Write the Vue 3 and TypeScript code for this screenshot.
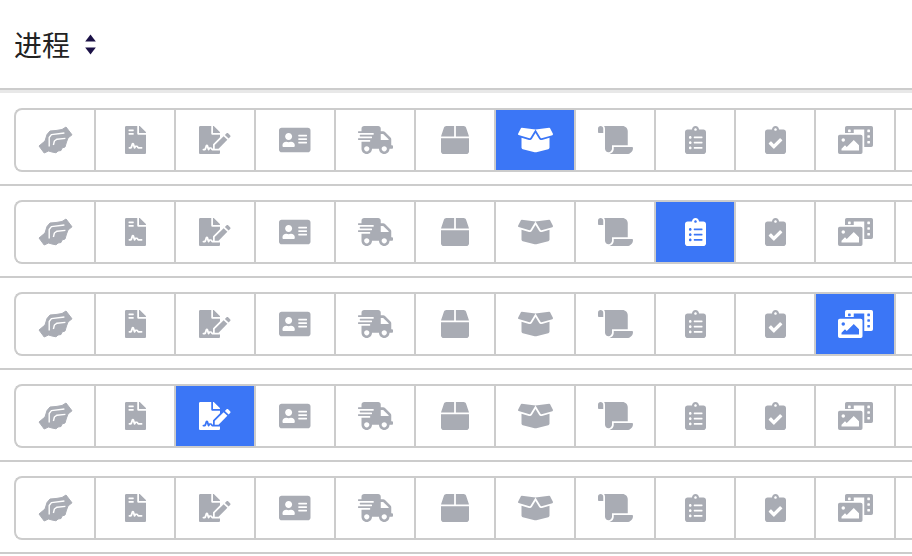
<template>
  <div class="page">
    <div class="head">
      <span class="title">进程</span>
      <svg class="sort" viewBox="0 0 11 21" width="11" height="21">
        <path d="M5.5 0.5 10.8 7.5H0.2Z" />
        <path d="M5.5 20.5 10.8 13.5H0.2Z" />
      </svg>
    </div>
    <div class="list">
      <div v-for="(active, r) in rows" :key="r" class="row">
        <div class="group">
          <div v-for="(icon, i) in icons" :key="i" :class="i === active ? 'cell on' : 'cell'">
            <svg v-if="icon.vb" :viewBox="icon.vb" width="35" height="28">
              <path v-for="(d, k) in icon.paths" :key="k" class="outline" :d="d" />
              <path v-if="icon.gap" class="gap" :d="icon.gap" />
            </svg>
            <svg v-else :viewBox="`0 0 ${icon.w} 512`" :width="(icon.w * 28) / 512" height="28">
              <path v-for="(d, k) in icon.paths" :key="k" :d="d" />
            </svg>
          </div>
          <div class="cell"></div>
        </div>
      </div>
    </div>
  </div>
</template>

<script setup lang="ts">
interface Icon {
  w: number
  paths: string[]
  vb?: string
  gap?: string
}

const clipHead = 'M336 64h-80c0-35.3-28.7-64-64-64s-64 28.7-64 64H48C21.5 64 0 85.5 0 112v352c0 26.5 21.5 48 48 48h288c26.5 0 48-21.5 48-48V112c0-26.5-21.5-48-48-48z'

const icons: Icon[] = [
  {
    // handshake, drawn by hand on a 35x28 box
    w: 640,
    vb: '0 0 35 28',
    paths: [
      'M1 20 7 15 9 8.5 12 5 18 4.5 24 3.5 28 1 34 8.8 30 12 28.5 16 27 21 24 22 23 24.5 20 25 18 26.8 14 26 10.5 25 6.2 27 Z',
    ],
    gap: 'M11.2 20.5V11.5L13.4 8.6 26.4 7M15.4 19 16.4 15 19 13.2 27.4 12.4',
  },
  {
    w: 384,
    paths: [
      'M224 136V0H24C10.7 0 0 10.7 0 24v464c0 13.3 10.7 24 24 24h336c13.3 0 24-10.7 24-24V160H248c-13.2 0-24-10.8-24-24zM64 72c0-4.42 3.58-8 8-8h80c4.42 0 8 3.58 8 8v16c0 4.42-3.58 8-8 8H72c-4.42 0-8-3.58-8-8V72zm0 64c0-4.42 3.58-8 8-8h80c4.42 0 8 3.58 8 8v16c0 4.42-3.58 8-8 8H72c-4.42 0-8-3.58-8-8v-16zm192.81 248H304c8.84 0 16 7.16 16 16s-7.16 16-16 16h-47.19c-16.45 0-31.27-9.14-38.64-23.86-2.95-5.92-8.09-6.52-10.17-6.52s-7.22.59-10.02 6.19l-7.67 15.34a15.986 15.986 0 0 1-14.31 8.84c-.38 0-.75-.02-1.14-.05-6.45-.45-12-4.75-14.03-10.89L144 354.59l-10.61 31.88c-5.89 17.66-22.38 29.53-41 29.53H80c-8.84 0-16-7.16-16-16s7.16-16 16-16h12.39c4.83 0 9.11-3.08 10.64-7.66l18.19-54.64c3.3-9.81 12.44-16.41 22.78-16.41s19.48 6.59 22.77 16.41l13.88 41.64c19.77-16.19 54.05-9.7 66 14.16 2.02 4.06 5.96 6.5 10.16 6.5z',
      'M377 105L279.1 7c-4.5-4.5-10.6-7-17-7H256v128h128v-6.1c0-6.3-2.5-12.4-7-16.9z',
    ],
  },
  {
    w: 576,
    paths: [
      'M218.17 424.14c-2.95-5.92-8.09-6.52-10.17-6.52s-7.22.59-10.02 6.19l-7.67 15.34c-6.37 12.78-25.03 11.37-29.48-2.09L144 386.59l-10.61 31.88c-5.89 17.66-22.38 29.53-41 29.53H80c-8.84 0-16-7.16-16-16s7.16-16 16-16h12.39c4.83 0 9.11-3.08 10.64-7.66l18.19-54.64c3.3-9.81 12.44-16.41 22.78-16.41s19.48 6.59 22.77 16.41l13.88 41.64c19.75-16.19 54.06-9.7 66 14.16 1.89 3.78 5.49 5.95 9.36 6.26v-82.12l128-127.09V160H248c-13.2 0-24-10.8-24-24V0H24C10.7 0 0 10.7 0 24v464c0 13.3 10.7 24 24 24h336c13.3 0 24-10.7 24-24v-40l-128-.11c-16.12-.31-30.58-9.28-37.83-23.75z',
      'M384 121.9c0-6.3-2.5-12.4-7-16.9L279.1 7c-4.5-4.5-10.6-7-17-7H256v128h128v-6.1z',
      'M288 346.96V416h68.99l161.68-162.78-67.88-67.88L288 346.96z',
      'M568.54 167.33l-31.87-31.87c-9.94-9.94-26.07-9.94-36.01 0l-27.25 27.25 67.88 67.88 27.25-27.25c9.95-9.94 9.95-26.07 0-36.01z',
    ],
  },
  {
    w: 576,
    paths: [
      'M528 32H48C21.5 32 0 53.5 0 80v352c0 26.5 21.5 48 48 48h480c26.5 0 48-21.5 48-48V80c0-26.5-21.5-48-48-48zm-352 96c35.3 0 64 28.7 64 64s-28.7 64-64 64-64-28.7-64-64 28.7-64 64-64zm112 236.8c0 10.6-10 19.2-22.4 19.2H86.4C74 384 64 375.4 64 364.8v-19.2c0-31.8 30.1-57.6 67.2-57.6h5c12.3 5.1 25.7 8 39.8 8s27.6-2.9 39.8-8h5c37.1 0 67.2 25.8 67.2 57.6v19.2zM512 312c0 4.4-3.6 8-8 8H360c-4.4 0-8-3.6-8-8v-16c0-4.4 3.6-8 8-8h144c4.4 0 8 3.6 8 8v16zm0-64c0 4.4-3.6 8-8 8H360c-4.4 0-8-3.6-8-8v-16c0-4.4 3.6-8 8-8h144c4.4 0 8 3.6 8 8v16zm0-64c0 4.4-3.6 8-8 8H360c-4.4 0-8-3.6-8-8v-16c0-4.4 3.6-8 8-8h144c4.4 0 8 3.6 8 8v16z',
    ],
  },
  {
    w: 640,
    paths: [
      'M624 352h-16V243.9c0-12.7-5.1-24.9-14.1-33.9L494 110.1c-9-9-21.2-14.1-33.9-14.1H416V48c0-26.5-21.5-48-48-48H112C85.5 0 64 21.5 64 48v48H8c-4.4 0-8 3.6-8 8v16c0 4.4 3.6 8 8 8h272c4.4 0 8 3.6 8 8v16c0 4.4-3.6 8-8 8H40c-4.4 0-8 3.6-8 8v16c0 4.4 3.6 8 8 8h208c4.4 0 8 3.6 8 8v16c0 4.4-3.6 8-8 8H8c-4.4 0-8 3.6-8 8v16c0 4.4 3.6 8 8 8h208c4.4 0 8 3.6 8 8v16c0 4.4-3.6 8-8 8H64v128c0 53 43 96 96 96s96-43 96-96h128c0 53 43 96 96 96s96-43 96-96h48c8.8 0 16-7.2 16-16v-32c0-8.8-7.2-16-16-16zM160 464c-26.5 0-48-21.5-48-48s21.5-48 48-48 48 21.5 48 48-21.5 48-48 48zm320 0c-26.5 0-48-21.5-48-48s21.5-48 48-48 48 21.5 48 48-21.5 48-48 48zm80-208H416V144h44.1l99.9 99.9V256z',
    ],
  },
  {
    w: 512,
    paths: [
      'M509.5 184.6L458.9 32.8C452.4 13.2 434.1 0 413.4 0H272v192h238.7c-.4-2.5-.4-5-1.2-7.4zM240 0H98.6c-20.7 0-39 13.2-45.5 32.8L2.5 184.6c-.8 2.4-.8 4.9-1.2 7.4H240V0zM0 224v240c0 26.5 21.5 48 48 48h416c26.5 0 48-21.5 48-48V224H0z',
    ],
  },
  {
    w: 640,
    paths: [
      'M425.7 256c-16.9 0-32.8-9-41.4-23.4L320 126l-64.2 106.6c-8.7 14.5-24.6 23.5-41.5 23.5-4.5 0-9-.6-13.3-1.9L64 215v178c0 14.7 10 27.5 24.2 31l216.2 54.1c10.2 2.5 20.9 2.5 31 0L551.8 424c14.2-3.6 24.2-16.4 24.2-31V215l-137 39.1c-4.3 1.3-8.8 1.9-13.3 1.9zm212.6-112.2L586.8 41c-3.1-6.2-9.8-9.8-16.7-8.9L320 64l91.7 152.1c3.8 6.3 11.4 9.3 18.5 7.3l197.9-56.5c9.9-2.9 14.7-13.9 10.2-23.1zM53.2 41L1.7 143.8c-4.6 9.2.3 20.2 10.1 23l197.9 56.5c7.1 2 14.7-1 18.5-7.3L320 64 69.8 32.1c-6.9-.8-13.5 2.7-16.6 8.9z',
    ],
  },
  {
    w: 640,
    paths: [
      'M48 0C21.53 0 0 21.53 0 48v64c0 8.84 7.16 16 16 16h80V48C96 21.53 74.47 0 48 0zm208 412.57V352h288V96c0-52.94-43.06-96-96-96H111.59C121.74 13.41 128 29.92 128 48v368c0 38.87 34.65 69.65 74.75 63.12C234.22 474 256 444.46 256 412.57zM288 384v32c0 52.93-43.06 96-96 96h336c61.86 0 112-50.14 112-112 0-8.84-7.16-16-16-16H288z',
    ],
  },
  {
    w: 384,
    paths: [
      clipHead +
        'M96 424c-13.3 0-24-10.7-24-24s10.7-24 24-24 24 10.7 24 24-10.7 24-24 24zm0-96c-13.3 0-24-10.7-24-24s10.7-24 24-24 24 10.7 24 24-10.7 24-24 24zm0-96c-13.3 0-24-10.7-24-24s10.7-24 24-24 24 10.7 24 24-10.7 24-24 24zm96-192c13.3 0 24 10.7 24 24s-10.7 24-24 24-24-10.7-24-24 10.7-24 24-24zm128 368c0 4.4-3.6 8-8 8H168c-4.4 0-8-3.6-8-8v-16c0-4.4 3.6-8 8-8h144c4.4 0 8 3.6 8 8v16zm0-96c0 4.4-3.6 8-8 8H168c-4.4 0-8-3.6-8-8v-16c0-4.4 3.6-8 8-8h144c4.4 0 8 3.6 8 8v16zm0-96c0 4.4-3.6 8-8 8H168c-4.4 0-8-3.6-8-8v-16c0-4.4 3.6-8 8-8h144c4.4 0 8 3.6 8 8v16z',
    ],
  },
  {
    w: 384,
    paths: [
      clipHead +
        'M192 40c13.3 0 24 10.7 24 24s-10.7 24-24 24-24-10.7-24-24 10.7-24 24-24zm121.2 231.8l-143 141.8c-4.7 4.7-12.3 4.6-17-.1l-82.6-83.3c-4.7-4.7-4.6-12.3.1-17L99.1 285c4.7-4.7 12.3-4.6 17 .1l46 46.4 106-105.2c4.7-4.7 12.3-4.6 17 .1l28.2 28.4c4.7 4.8 4.6 12.3-.1 17z',
    ],
  },
  {
    w: 640,
    paths: [
      'M608 0H160a32 32 0 0 0-32 32v96h160V64h192v320h128a32 32 0 0 0 32-32V32a32 32 0 0 0-32-32zM232 103a9 9 0 0 1-9 9h-30a9 9 0 0 1-9-9V73a9 9 0 0 1 9-9h30a9 9 0 0 1 9 9zm352 208a9 9 0 0 1-9 9h-30a9 9 0 0 1-9-9v-30a9 9 0 0 1 9-9h30a9 9 0 0 1 9 9zm0-104a9 9 0 0 1-9 9h-30a9 9 0 0 1-9-9v-30a9 9 0 0 1 9-9h30a9 9 0 0 1 9 9zm0-104a9 9 0 0 1-9 9h-30a9 9 0 0 1-9-9V73a9 9 0 0 1 9-9h30a9 9 0 0 1 9 9z',
      'M416 160H32a32 32 0 0 0-32 32v288a32 32 0 0 0 32 32h384a32 32 0 0 0 32-32V192a32 32 0 0 0-32-32zM96 224a32 32 0 1 1-32 32 32 32 0 0 1 32-32zm288 224H64v-32l64-64 32 32 128-128 96 96z',
    ],
  },
]

// index of the highlighted button per row, -1 for none
const rows = [6, 8, 10, 2, -1]
</script>

<style>
html,
body {
  margin: 0;
  background: #fff;
  overflow: hidden;
}
</style>

<style scoped>
.page {
  width: 912px;
  height: 556px;
  overflow: hidden;
  font-family: "Noto Sans CJK SC", "Noto Sans", sans-serif;
}

.head {
  display: flex;
  align-items: center;
  gap: 15px;
  height: 90px;
  padding-left: 14px;
  box-sizing: border-box;
  border-bottom: 2px solid #ccc;
}

.title {
  font-size: 28px;
  color: #222;
}

.sort {
  fill: #1b1146;
}

.list {
  border-top: 3px solid #e8e8e8;
  padding-top: 1px;
}

.row {
  padding: 14px 0 12px 14px;
  border-bottom: 2px solid #ccc;
  overflow: hidden;
}

.group {
  display: flex;
  width: max-content;
  height: 60px;
  border: 2px solid #ccc;
  border-right: 0;
  border-radius: 8px 0 0 8px;
  overflow: hidden;
}

.cell {
  display: flex;
  align-items: center;
  justify-content: center;
  width: 78px;
  fill: #a9acb4;
}

.cell + .cell {
  border-left: 2px solid #ccc;
}

.cell.on {
  background: #3b76f6;
  fill: #fff;
}

.outline {
  stroke: #a9acb4;
  stroke-width: 1;
  stroke-linejoin: round;
}

.gap {
  fill: none;
  stroke: #fff;
  stroke-width: 1.4;
  stroke-linejoin: round;
}
</style>
